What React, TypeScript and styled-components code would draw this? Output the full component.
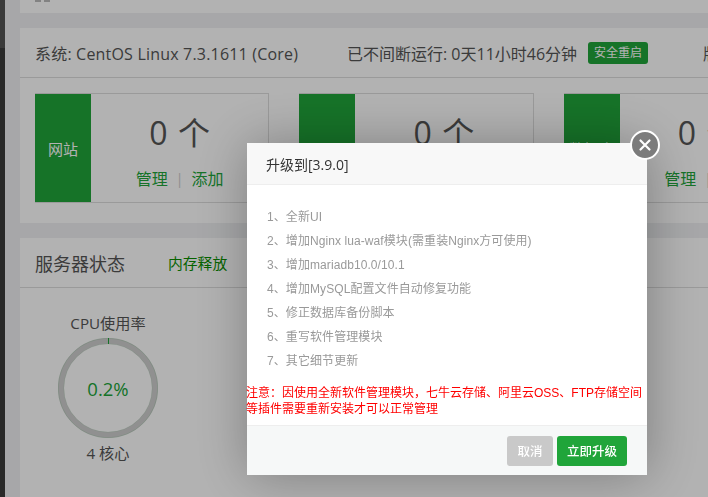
import React from "react";
import styled, { createGlobalStyle } from "styled-components";

const Global = createGlobalStyle`
  html, body { margin: 0; padding: 0; width: 708px; height: 497px; overflow: hidden; background: #f0f0f0; }
  * { box-sizing: border-box; }
  body { font-family: "Open Sans", "Noto Sans CJK SC", sans-serif; color: #555; }
`;

const Shell = styled.div`
  display: flex;
  width: 708px;
  height: 497px;
  overflow: hidden;
`;
const Sidebar = styled.div`
  width: 5px;
  flex: none;
  background: linear-gradient(#545454 0, #545454 48px, #3c3c3c 48px);
`;
const Main = styled.div`
  flex: 1;
  min-width: 0;
  padding: 0 0 0 15px;
  display: flex;
  flex-direction: column;
  gap: 15px;
  background: #eff0f2;
`;
const Panel = styled.section`
  background: #fff;
  flex: none;
`;
const TopPanel = styled(Panel)`
  height: 13px;
  padding-left: 15px;
  display: flex;
  gap: 3px;
`;
const TopMark = styled.span`
  width: 6px;
  height: 2px;
  background: #bbb;
`;
const SystemBar = styled.div`
  height: 50px;
  border-bottom: 1px solid #ddd;
  padding: 0 0 0 15px;
  display: flex;
  align-items: center;
  font-size: 16px;
  white-space: nowrap;
  color: #555;
  & > * {
    flex: none;
  }
`;
const SystemName = styled.span`
  width: 263px;
  letter-spacing: 0.19px;
`;
const RunTime = styled.span`
  margin-left: 49px;
  width: 231px;
`;
const RestartBtn = styled.span`
  margin-left: 10px;
  width: 60px;
  height: 22px;
  line-height: 22px;
  text-align: center;
  font-size: 12px;
  color: #fff;
  background: #20a53a;
  border-radius: 3px;
`;
const Version = styled.span`
  margin-left: 55px;
`;
const Cards = styled.div`
  display: flex;
  gap: 30px;
  padding: 15px 0 20px 15px;
`;
const Card = styled.div`
  flex: none;
  width: 234.25px;
  height: 110px;
  display: flex;
  border: 1px solid #ddd;
  border-left: none;
`;
const CardLabel = styled.div`
  width: 56px;
  flex: none;
  background: #20a53a;
  color: #fff;
  font-size: 15px;
  display: flex;
  align-items: center;
  justify-content: center;
`;
const CardBody = styled.div`
  flex: 1;
  display: flex;
  flex-direction: column;
  align-items: center;
`;
const Count = styled.div`
  font-size: 32px;
  line-height: 40px;
  margin-top: 19px;
  color: #555;
  word-spacing: 2px;
`;
const CardLinks = styled.div`
  margin-top: 14px;
  font-size: 16px;
  line-height: 24px;
  display: flex;
  gap: 8px;
  color: #20a53a;
`;
const Sep = styled.span`
  color: #ccc;
  font-size: 14px;
`;
const StatusHead = styled.div`
  height: 50px;
  border-bottom: 1px solid #ddd;
  padding-left: 15px;
  display: flex;
  align-items: center;
`;
const StatusTitle = styled.h2`
  margin: 0;
  font-size: 18px;
  font-weight: 400;
  color: #555;
`;
const Release = styled.span`
  margin-left: 43px;
  font-size: 14.8px;
  color: #0a8f00;
`;
const Gauges = styled.div`
  padding: 23px 0 0 35px;
  height: 260px;
`;
const Gauge = styled.div`
  width: 106px;
  display: flex;
  flex-direction: column;
  align-items: center;
  color: #555;
  font-size: 15.2px;
`;
const GaugeRing = styled.div`
  position: relative;
  width: 100px;
  height: 100px;
  margin: 5px 0 3px;
  display: flex;
  align-items: center;
  justify-content: center;
`;
const RingSvg = styled.svg`
  position: absolute;
  inset: 0;
`;
const GaugeValue = styled.span`
  font-size: 18.5px;
  color: #20a53a;
`;

const Overlay = styled.div`
  position: fixed;
  inset: 0;
  background: rgba(0, 0, 0, 0.3);
`;
const Modal = styled.div`
  position: fixed;
  left: 247px;
  top: 143px;
  width: 400px;
  height: 332px;
  background: #fff;
  box-shadow: 1px 1px 50px rgba(0, 0, 0, 0.3);
  display: flex;
  flex-direction: column;
`;
const ModalHead = styled.header`
  height: 42px;
  flex: none;
  padding-left: 19px;
  display: flex;
  align-items: center;
  font-size: 14px;
  color: #333;
  background: #f8f8f8;
  border-bottom: 1px solid #eee;
`;
const ModalBody = styled.div`
  flex: 1;
  display: flex;
  flex-direction: column;
  font-family: "Liberation Sans", "Noto Sans CJK SC", sans-serif;
`;
const Notes = styled.ul`
  list-style: none;
  margin: 0;
  padding: 20px 0 0 20px;
  font-size: 12px;
  line-height: 24px;
  letter-spacing: 0.08px;
  color: #999;
`;
const Warning = styled.p`
  margin: 12px 0 0 -1px;
  font-size: 12px;
  line-height: 16px;
  color: #f00;
`;
const ModalFoot = styled.footer`
  height: 50px;
  flex: none;
  background: #f6f8f8;
  border-top: 1px solid #eee;
  padding-right: 20px;
  display: flex;
  align-items: center;
  justify-content: flex-end;
  gap: 4px;
`;
const FootBtn = styled.button<{ $primary?: boolean }>`
  height: 30px;
  width: ${(p) => (p.$primary ? 70 : 46)}px;
  padding: 0;
  border: none;
  border-radius: 3px;
  font-family: inherit;
  font-size: 12.5px;
  font-weight: 500;
  color: #fff;
  background: ${(p) => (p.$primary ? "#20a53a" : "#c9c9c9")};
`;
const Close = styled.button`
  position: fixed;
  left: 630px;
  top: 130px;
  width: 30px;
  height: 30px;
  padding: 0;
  border: 2.5px solid #fff;
  border-radius: 50%;
  background: #7c7c7c;
  display: flex;
  align-items: center;
  justify-content: center;
`;

const notes = [
  "1、全新UI",
  "2、增加Nginx lua-waf模块(需重装Nginx方可使用)",
  "3、增加mariadb10.0/10.1",
  "4、增加MySQL配置文件自动修复功能",
  "5、修正数据库备份脚本",
  "6、重写软件管理模块",
  "7、其它细节更新",
];

const cards = ["网站", "FTP", "数据库"];

export default function App() {
  return (
    <Shell>
      <Global />
      <Sidebar />
      <Main>
        <TopPanel>
          <TopMark />
          <TopMark />
        </TopPanel>
        <Panel>
          <SystemBar>
            <SystemName>系统: CentOS Linux 7.3.1611 (Core)</SystemName>
            <RunTime>已不间断运行: 0天11小时46分钟</RunTime>
            <RestartBtn>安全重启</RestartBtn>
            <Version>版本</Version>
          </SystemBar>
          <Cards>
            {cards.map((c) => (
              <Card key={c}>
                <CardLabel>{c}</CardLabel>
                <CardBody>
                  <Count>0 个</Count>
                  <CardLinks>
                    <span>管理</span>
                    <Sep>|</Sep>
                    <span>添加</span>
                  </CardLinks>
                </CardBody>
              </Card>
            ))}
          </Cards>
        </Panel>
        <Panel>
          <StatusHead>
            <StatusTitle>服务器状态</StatusTitle>
            <Release>内存释放</Release>
          </StatusHead>
          <Gauges>
            <Gauge>
              <span>CPU使用率</span>
              <GaugeRing>
                <RingSvg width="100" height="100" viewBox="0 0 100 100">
                  <circle cx="50" cy="50" r="47" fill="none" stroke="#cfcfcf" strokeWidth="6" />
                  <circle cx="50" cy="50" r="49.8" fill="none" stroke="#20a53a" strokeWidth="0.4" opacity="0.3" />
                  <circle cx="50" cy="50" r="44.2" fill="none" stroke="#20a53a" strokeWidth="0.4" opacity="0.2" />
                  <line x1="50.5" y1="0" x2="50.5" y2="6" stroke="#20a53a" strokeWidth="1" />
                </RingSvg>
                <GaugeValue>0.2%</GaugeValue>
              </GaugeRing>
              <span>4 核心</span>
            </Gauge>
          </Gauges>
        </Panel>
      </Main>
      <Overlay />
      <Modal>
        <ModalHead>升级到[3.9.0]</ModalHead>
        <ModalBody>
          <Notes>
            {notes.map((n) => (
              <li key={n}>{n}</li>
            ))}
          </Notes>
          <Warning>
            注意：因使用全新软件管理模块，七牛云存储、阿里云OSS、FTP存储空间
            <br />
            等插件需要重新安装才可以正常管理
          </Warning>
        </ModalBody>
        <ModalFoot>
          <FootBtn>取消</FootBtn>
          <FootBtn $primary>立即升级</FootBtn>
        </ModalFoot>
      </Modal>
      <Close aria-label="关闭">
        <svg width="14" height="14" viewBox="0 0 14 14">
          <path d="M2.5 2.5 L11.5 11.5 M11.5 2.5 L2.5 11.5" stroke="#fff" strokeWidth="2.2" strokeLinecap="round" />
        </svg>
      </Close>
    </Shell>
  );
}
